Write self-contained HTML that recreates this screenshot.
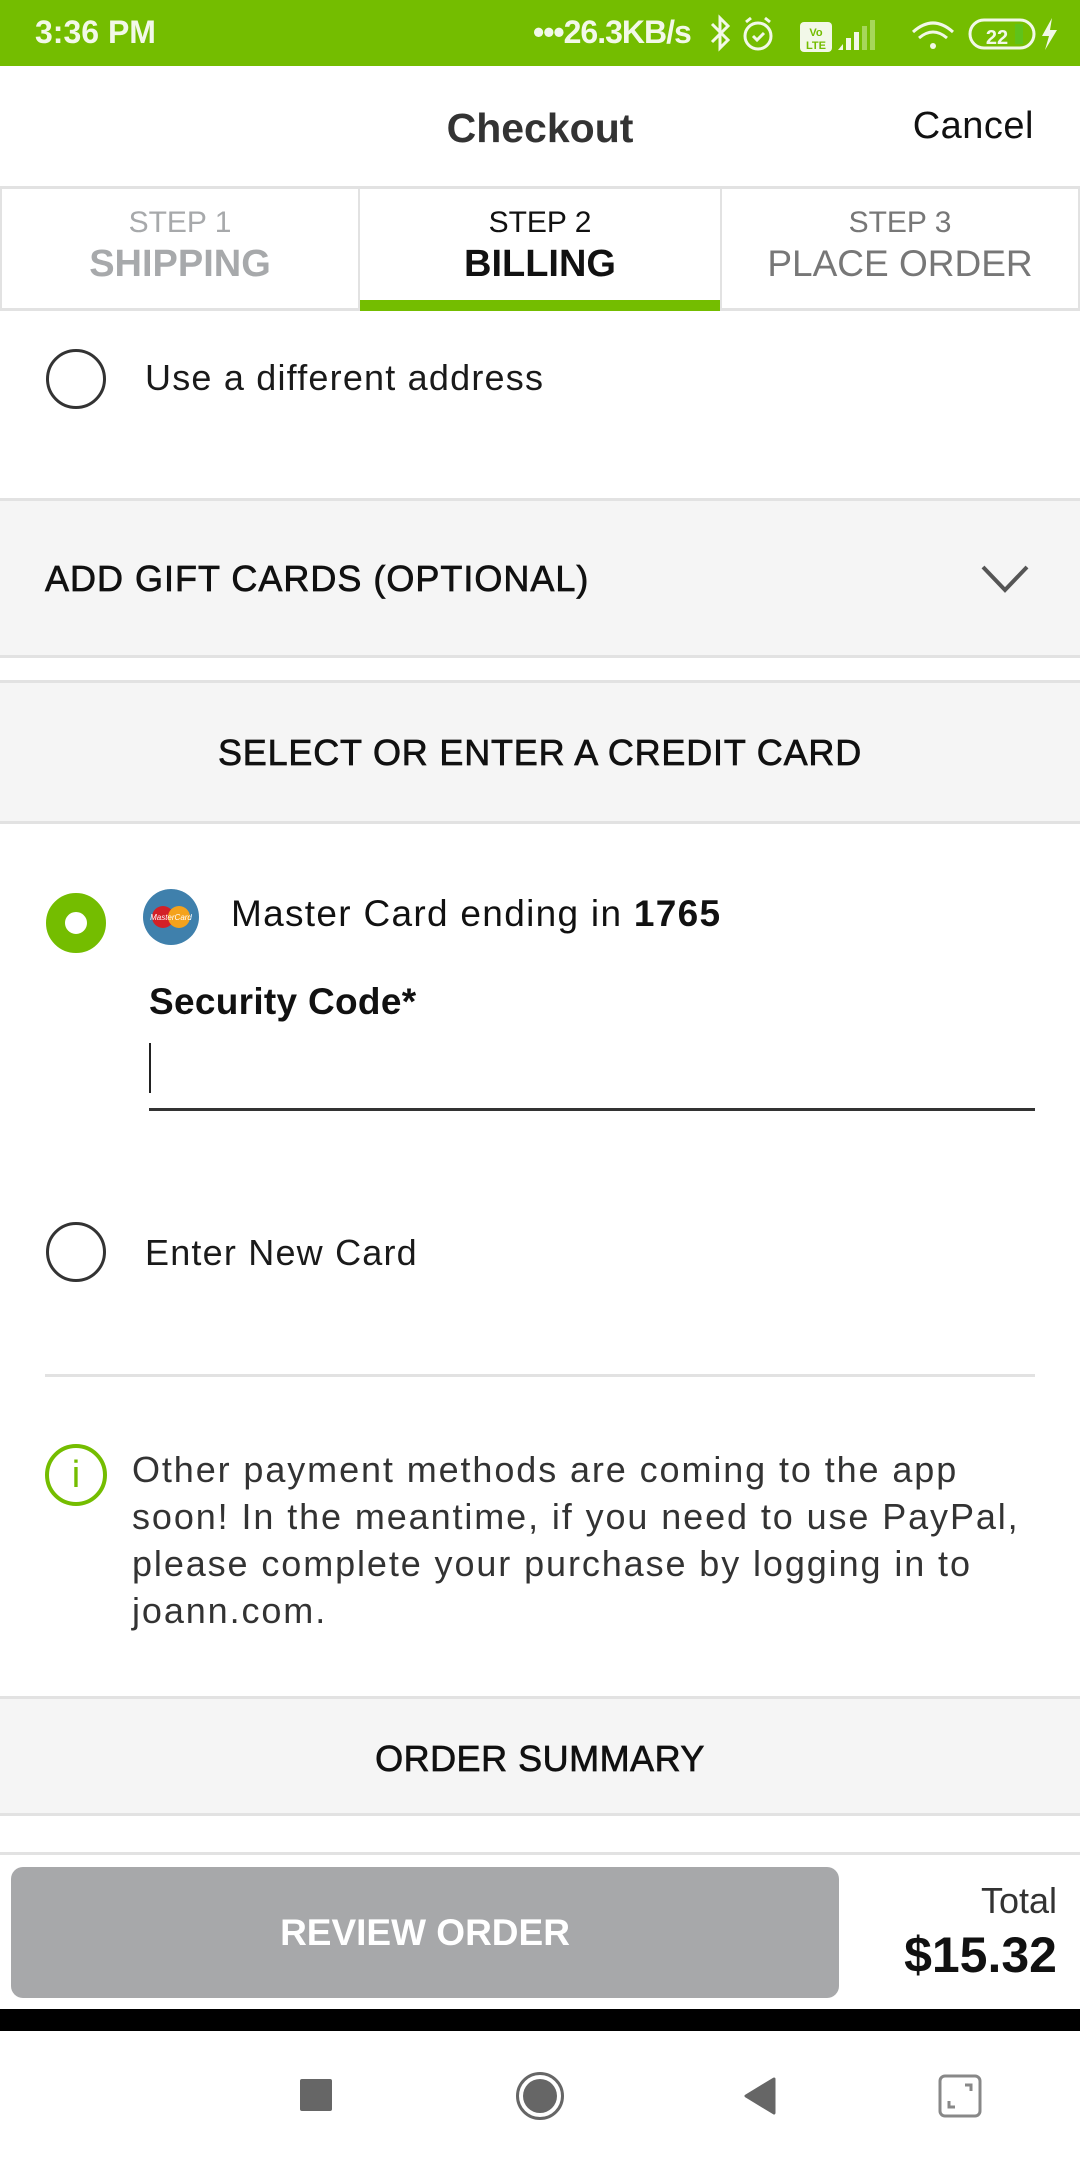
<!DOCTYPE html>
<html><head><meta charset="utf-8">
<style>
*{margin:0;padding:0;box-sizing:border-box}
body{width:1080px;height:2160px;position:relative;background:#fff;font-family:"Liberation Sans",sans-serif;color:#1a1a1a;overflow:hidden}
.a{position:absolute;white-space:nowrap}
.line{position:absolute;left:0;width:1080px;height:3px;background:#e2e2e2}
.radio{position:absolute;width:60px;height:60px;border:3px solid #333;border-radius:50%}
.med{-webkit-text-stroke:0.7px currentColor}
</style></head><body>
<!-- status bar -->
<div class="a" style="left:0;top:0;width:1080px;height:66px;background:#74bd00"></div>
<div class="a" style="left:35px;top:14px;font-size:32px;font-weight:bold;color:#f2f8e8">3:36 PM</div>
<div class="a" style="left:533px;top:14px;font-size:32px;font-weight:bold;color:#f2f8e8;letter-spacing:-1px">•••26.3KB/s</div>
<svg class="a" style="left:710px;top:14px" width="360" height="40" viewBox="0 0 360 40">
 <g fill="none" stroke="#f2f8e8" stroke-width="3">
  <path d="M2 10 L18 26 L10 34 L10 4 L18 12 L2 28"/>
  <circle cx="48" cy="22" r="13"/><path d="M43 22 l4 4 l7-7"/><path d="M36 8 l5-4 M60 8 l-5-4"/>
  <path d="M203 18 q20-18 40 0 M209 24 q14-12 28 0"/>
  <rect x="260" y="6" width="64" height="28" rx="14"/>
 </g>
 <rect x="90" y="8" width="32" height="30" rx="4" fill="#f2f8e8"/>
 <text x="106" y="22" font-size="11" font-weight="bold" fill="#74bd00" text-anchor="middle" font-family="Liberation Sans">Vo</text>
 <text x="106" y="35" font-size="11" font-weight="bold" fill="#74bd00" text-anchor="middle" font-family="Liberation Sans">LTE</text>
 <path d="M128 36 h5 v-6 z M136 36 h5 v-12 h-5z M144 36 h5 v-18 h-5z" fill="#f2f8e8"/>
 <path d="M152 36 h5 v-24 h-5z M160 36 h5 v-30 h-5z" fill="#a6d75a"/>
 <circle cx="223" cy="32" r="3" fill="#f2f8e8"/>
 <text x="287" y="30" font-size="20" font-weight="bold" fill="#f2f8e8" text-anchor="middle" font-family="Liberation Sans">22</text>
 <rect x="305" y="10" width="8" height="20" fill="#5fc21a"/>
 <path d="M342 4 l-10 18 h7 l-4 14 l12-20 h-7 z" fill="#f2f8e8"/>
</svg>
<!-- header -->
<div class="a" style="left:0;top:105px;width:1080px;text-align:center;font-size:41px;font-weight:bold;color:#333">Checkout</div>
<div class="a" style="right:46px;top:105px;font-size:38px;color:#111;letter-spacing:0.5px">Cancel</div>
<!-- tabs -->
<div class="line" style="top:186px"></div>
<div class="a" style="left:0;top:188px;width:360px;height:122px;border-left:2px solid #e2e2e2;border-right:2px solid #e2e2e2;text-align:center">
 <div style="margin-top:18px;font-size:30px;color:#a7a9ab">STEP 1</div>
 <div style="font-size:38px;font-weight:bold;color:#a7a9ab;margin-top:3px">SHIPPING</div>
</div>
<div class="a" style="left:360px;top:188px;width:360px;height:122px;text-align:center">
 <div style="margin-top:18px;font-size:30px;color:#111">STEP 2</div>
 <div style="font-size:38px;font-weight:bold;color:#111;margin-top:3px">BILLING</div>
</div>
<div class="a" style="left:720px;top:188px;width:360px;height:122px;border-left:2px solid #e2e2e2;border-right:2px solid #e2e2e2;text-align:center">
 <div style="margin-top:18px;font-size:30px;color:#777">STEP 3</div>
 <div style="font-size:37px;color:#777;margin-top:3px">PLACE ORDER</div>
</div>
<div class="line" style="top:308px"></div>
<div class="a" style="left:360px;top:300px;width:360px;height:11px;background:#74bd00"></div>
<!-- different address -->
<div class="radio" style="left:46px;top:349px"></div>
<div class="a" style="left:145px;top:357px;font-size:36px;color:#1a1a1a;letter-spacing:1.2px">Use a different address</div>
<div class="line" style="top:498px"></div>
<div class="a" style="left:0;top:501px;width:1080px;height:155px;background:#f5f5f5"></div>
<div class="a med" style="left:45px;top:558px;font-size:36px;color:#111;letter-spacing:1px">ADD GIFT CARDS (OPTIONAL)</div>
<svg class="a" style="left:980px;top:564px" width="50" height="30"><path d="M3 3 L25 26 L47 3" fill="none" stroke="#555" stroke-width="4"/></svg>
<div class="line" style="top:655px"></div>
<div class="line" style="top:680px"></div>
<div class="a" style="left:0;top:683px;width:1080px;height:139px;background:#f5f5f5"></div>
<div class="a med" style="left:0;top:732px;width:1080px;text-align:center;font-size:36px;color:#111;letter-spacing:0.8px">SELECT OR ENTER A CREDIT CARD</div>
<div class="line" style="top:821px"></div>
<!-- mastercard -->
<div class="a" style="left:46px;top:893px;width:60px;height:60px;border-radius:50%;border:19px solid #74bd00;background:#fff"></div>
<svg class="a" style="left:143px;top:889px" width="56" height="56"><circle cx="28" cy="28" r="28" fill="#3f80ac"/><circle cx="20" cy="28" r="11" fill="#d32027"/><circle cx="36" cy="28" r="11" fill="#f4a21c"/><text x="28" y="31" font-size="8" fill="#fff" text-anchor="middle" font-style="italic" font-family="Liberation Sans">MasterCard</text></svg>
<div class="a" style="left:231px;top:893px;font-size:37px;color:#111;letter-spacing:1.3px">Master Card ending in <b>1765</b></div>
<div class="a" style="left:149px;top:981px;font-size:37px;font-weight:bold;color:#111;letter-spacing:0.3px">Security Code*</div>
<div class="a" style="left:149px;top:1043px;width:2px;height:50px;background:#222"></div>
<div class="a" style="left:149px;top:1108px;width:886px;height:3px;background:#333"></div>
<!-- new card -->
<div class="radio" style="left:46px;top:1222px"></div>
<div class="a" style="left:145px;top:1232px;font-size:36px;color:#1a1a1a;letter-spacing:1.2px">Enter New Card</div>
<div class="a" style="left:45px;top:1374px;width:990px;height:3px;background:#e2e2e2"></div>
<!-- info -->
<div class="a" style="left:45px;top:1444px;width:62px;height:62px;border:4px solid #74bd00;border-radius:50%;text-align:center;color:#74bd00;font-size:38px;line-height:54px">i</div>
<div class="a" style="left:132px;top:1446px;font-size:36px;line-height:47px;color:#333;white-space:nowrap;letter-spacing:1.9px">Other payment methods are coming to the app<br>soon! In the meantime, if you need to use PayPal,<br>please complete your purchase by logging in to<br>joann.com.</div>
<div class="line" style="top:1696px"></div>
<div class="a" style="left:0;top:1699px;width:1080px;height:115px;background:#f5f5f5"></div>
<div class="a med" style="left:0;top:1738px;width:1080px;text-align:center;font-size:36px;color:#111;letter-spacing:0.5px">ORDER SUMMARY</div>
<div class="line" style="top:1813px"></div>
<div class="line" style="top:1852px"></div>
<!-- bottom -->
<div class="a" style="left:11px;top:1867px;width:828px;height:131px;background:#a7a8aa;border-radius:12px;text-align:center;line-height:131px;font-size:37px;font-weight:bold;color:#fff">REVIEW ORDER</div>
<div class="a" style="right:23px;top:1880px;font-size:36px;color:#333">Total</div>
<div class="a" style="right:23px;top:1926px;font-size:50px;font-weight:bold;color:#111">$15.32</div>
<div class="a" style="left:0;top:2009px;width:1080px;height:22px;background:#000"></div>
<!-- nav -->
<div class="a" style="left:300px;top:2079px;width:32px;height:32px;background:#666;border-radius:2px"></div>
<div class="a" style="left:516px;top:2072px;width:48px;height:48px;border:3px solid #666;border-radius:50%;padding:4px"><div style="width:34px;height:34px;background:#666;border-radius:50%"></div></div>
<svg class="a" style="left:742px;top:2077px" width="36" height="38"><path d="M32 2 L4 19 L32 36 Z" fill="#666" stroke="#666" stroke-linejoin="round" stroke-width="3"/></svg>
<svg class="a" style="left:938px;top:2074px" width="44" height="44"><rect x="2" y="2" width="40" height="40" rx="5" fill="none" stroke="#888" stroke-width="3"/><path d="M27 11 h6 v6 M11 27 v6 h6" fill="none" stroke="#888" stroke-width="3"/></svg>
</body></html>
